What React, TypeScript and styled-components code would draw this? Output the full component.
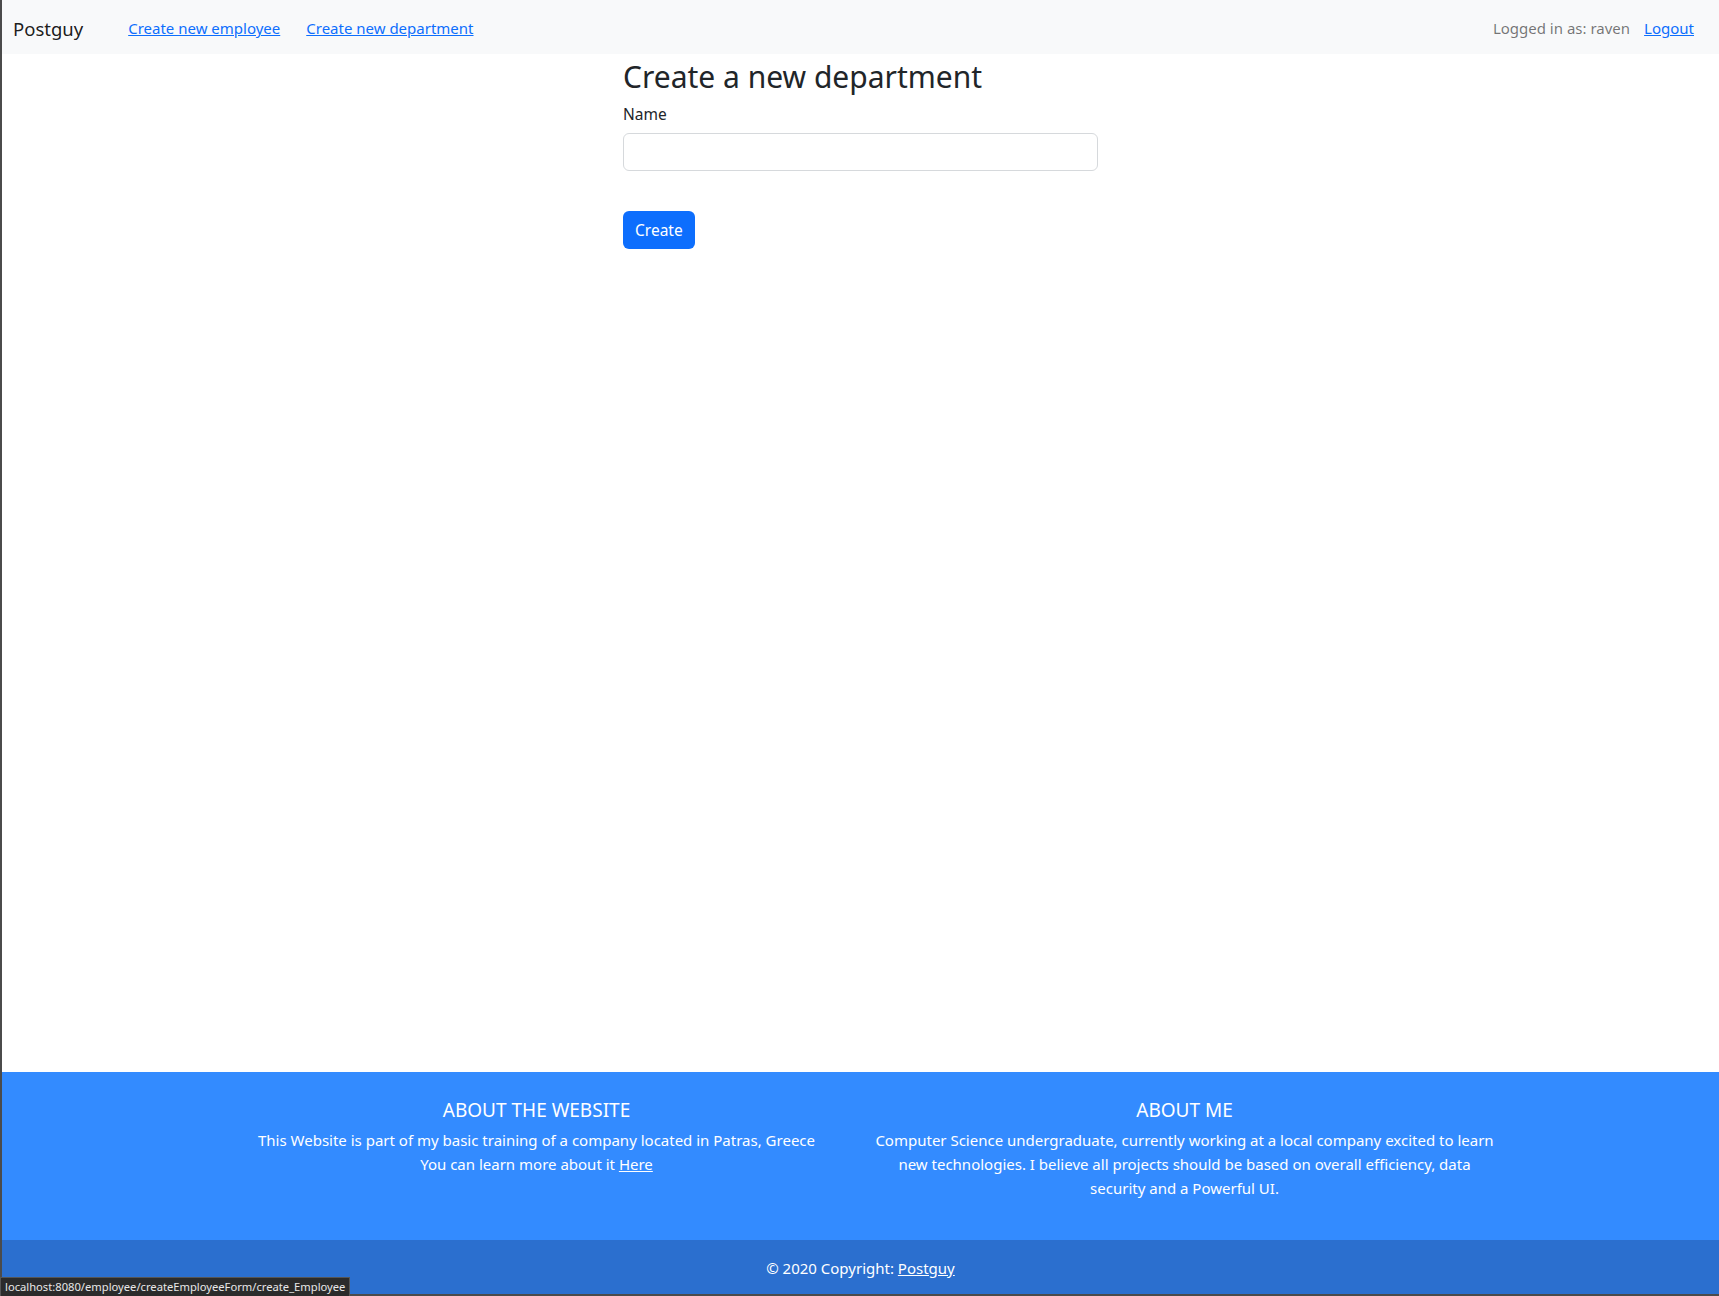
import React from "react"
import styled, { createGlobalStyle } from "styled-components"

const GlobalStyle = createGlobalStyle`
	html, body {
		margin: 0;
		padding: 0;
	}
	body {
		font-family: "Noto Sans", "Open Sans", "Liberation Sans", sans-serif;
		font-size: 15px;
		line-height: 1.5;
		color: #212529;
		background: #ffffff;
	}
	* {
		box-sizing: border-box;
	}
`

const Page = styled.div`
	display: flex;
	flex-direction: column;
	min-height: 1296px;
	border-left: 2px solid #4b4b4b;
	border-bottom: 2px solid #4b4b4b;
`

const Navbar = styled.nav`
	display: flex;
	align-items: center;
	height: 54px;
	padding: 3px 25px 0 11px;
	background: #f8f9fa;
`

const Brand = styled.a`
	font-size: 18.5px;
	color: rgba(0, 0, 0, 0.9);
	text-decoration: none;
	margin-right: 45px;
`

const NavLinks = styled.div`
	display: flex;
	gap: 26px;
`

const NavLink = styled.a`
	color: #0d6efd;
	text-decoration: underline;
	font-size: 15px;
`

const NavRight = styled.div`
	display: flex;
	align-items: center;
	gap: 14px;
	margin-left: auto;
`

const UserText = styled.span`
	color: rgba(0, 0, 0, 0.55);
`

const Main = styled.main`
	flex: 1;
	display: flex;
	justify-content: center;
	padding-top: 4px;
`

const Form = styled.form`
	width: 475px;
	display: flex;
	flex-direction: column;
	align-items: flex-start;
`

const Title = styled.h2`
	margin: 0 0 6px;
	font-size: 30px;
	font-weight: 400;
	line-height: 38px;
`

const Label = styled.label`
	margin-bottom: 7px;
	font-size: 15.5px;
	line-height: 24px;
`

const Input = styled.input`
	width: 100%;
	height: 38px;
	padding: 6px 12px;
	border: 1px solid #d6d9dc;
	border-radius: 6px;
	font: inherit;
	margin-bottom: 40px;
`

const Button = styled.button`
	height: 38px;
	padding: 2px 12px 0;
	border: none;
	border-radius: 6px;
	background: #0d6efd;
	color: #ffffff;
	font: inherit;
	font-size: 15.5px;
	cursor: pointer;
`

const FooterTop = styled.div`
	background: #338bff;
	color: #ffffff;
	height: 168px;
	padding-top: 26px;
	display: flex;
	justify-content: center;
`

const FooterRow = styled.div`
	width: 1296px;
	display: grid;
	grid-template-columns: 1fr 1fr;
`

const FooterCol = styled.div`
	padding: 0 12px;
	text-align: center;
`

const FooterTitle = styled.h5`
	margin: 0 0 6px;
	font-size: 19px;
	font-weight: 400;
	line-height: 24px;
	text-transform: uppercase;
`

const FooterText = styled.p`
	margin: 0;
	line-height: 24px;
	font-size: 15px;
`

const FooterLink = styled.a`
	color: #ffffff;
	text-decoration: underline;
`

const FooterBottom = styled.div`
	background: #2b6fcf;
	color: #ffffff;
	height: 54px;
	padding-top: 3px;
	display: flex;
	align-items: center;
	justify-content: center;
`

const StatusBar = styled.div`
	position: fixed;
	left: 0;
	bottom: 0;
	height: 19px;
	padding: 0 4px;
	background: #2b2b2b;
	border: 1px solid #555555;
	border-bottom: none;
	color: #e8e8e8;
	font-size: 11.2px;
	line-height: 18px;
	white-space: nowrap;
`

export default function App() {
	return (
		<>
			<GlobalStyle />
			<Page>
				<Navbar>
					<Brand href="#">Postguy</Brand>
					<NavLinks>
						<NavLink href="#">Create new employee</NavLink>
						<NavLink href="#">Create new department</NavLink>
					</NavLinks>
					<NavRight>
						<UserText>Logged in as: raven</UserText>
						<NavLink href="#">Logout</NavLink>
					</NavRight>
				</Navbar>
				<Main>
					<Form onSubmit={(e) => e.preventDefault()}>
						<Title>Create a new department</Title>
						<Label htmlFor="name">Name</Label>
						<Input id="name" type="text" />
						<Button type="submit">Create</Button>
					</Form>
				</Main>
				<footer>
					<FooterTop>
						<FooterRow>
							<FooterCol>
								<FooterTitle>About the website</FooterTitle>
								<FooterText>
									This Website is part of my basic training of a company located in
									Patras, Greece
									<br />
									You can learn more about it <FooterLink href="#">Here</FooterLink>
								</FooterText>
							</FooterCol>
							<FooterCol>
								<FooterTitle>About me</FooterTitle>
								<FooterText>
									Computer Science undergraduate, currently working at a local company
									excited to learn new technologies. I believe all projects should be
									based on overall efficiency, data security and a Powerful UI.
								</FooterText>
							</FooterCol>
						</FooterRow>
					</FooterTop>
					<FooterBottom>
						© 2020 Copyright:&nbsp;<FooterLink href="#">Postguy</FooterLink>
					</FooterBottom>
				</footer>
			</Page>
			<StatusBar>localhost:8080/employee/createEmployeeForm/create_Employee</StatusBar>
		</>
	)
}
